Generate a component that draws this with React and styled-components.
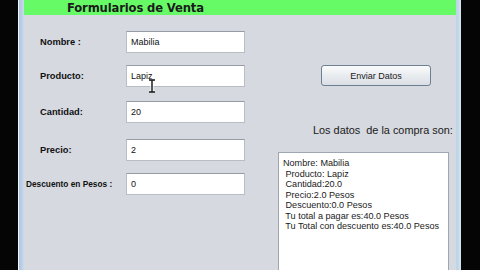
import React from 'react'
import styled, { createGlobalStyle } from 'styled-components'

const Global = createGlobalStyle`
  html, body { margin: 0; padding: 0; background: #050505; }
  body { width: 480px; height: 270px; overflow: hidden; font-family: "Liberation Sans", Arial, sans-serif; }
`;

const Screen = styled.div`
  width: 480px;
  height: 270px;
  display: flex;
  background: #050505;
`;

const Frame = styled.div`
  margin-left: 18px;
  width: 443px;
  height: 270px;
  display: flex;
  flex-direction: column;
  border-left: 1px solid #f4f6f8;
  background: linear-gradient(90deg, #a9c3e0 0, #c3d6ea 4px, #d6d9e0 5px, #d6d9e0 calc(100% - 6px), #b9d3e6 calc(100% - 4px), #d7e6ef 100%);
  padding: 0 5px 0 5px;
  box-sizing: border-box;
`;

const Header = styled.div`
  height: 15px;
  background: #66fb66;
  display: flex;
  align-items: flex-end;
  padding-left: 43px;
  h1 {
    margin: 0;
    font-family: Tahoma, "DejaVu Sans", sans-serif;
    font-size: 11.6px;
    font-weight: bold;
    color: #1b1b1b;
    line-height: 14px;
    letter-spacing: -0.15px;
  }
`;

const Panel = styled.div`
  flex: 1;
  display: flex;
  position: relative;
  background: #d6d9e0;
`;

const FormCol = styled.div`
  width: 230px;
  display: flex;
  flex-direction: column;
  padding-top: 16px;
`;

const Row = styled.div`
  height: 22px;
  margin-top: ${({ $mt }) => $mt}px;
  display: flex;
  align-items: center;
`;

const Label = styled.label`
  width: ${({ $small }) => ($small ? '100px' : '86px')};
  padding-left: ${({ $small }) => ($small ? '2px' : '16px')};
  font-family: "Liberation Sans", Arial, sans-serif;
  font-weight: bold;
  font-size: ${({ $small }) => ($small ? '8.3px' : '9.3px')};
  color: #111;
  white-space: nowrap;
`;

const Field = styled.input`
  width: 119px;
  height: 22px;
  box-sizing: border-box;
  border: 1px solid #b9bec6;
  border-top-color: #969ca6;
  background: #fff;
  padding: 0 4px;
  font-family: "Liberation Sans", Arial, sans-serif;
  font-size: 9px;
  color: #111;
  outline: none;
`;

const SideCol = styled.div`
  flex: 1;
  display: flex;
  flex-direction: column;
  align-items: flex-start;
  padding-top: 50px;
`;

const Button = styled.button`
  margin-left: 67px;
  width: 110px;
  height: 21px;
  border: 1px solid #6f7f92;
  border-radius: 3px;
  background: linear-gradient(#fafbfc, #e9ecef 50%, #dadee4);
  font-family: "Liberation Sans", Arial, sans-serif;
  font-size: 9px;
  color: #222;
  padding: 0;
`;

const Caption = styled.div`
  margin-top: 38px;
  margin-left: 59px;
  font-family: "Liberation Sans", Arial, sans-serif;
  font-size: 10.9px;
  color: #1a1a1a;
  white-space: pre;
`;

const Output = styled.div`
  margin-top: 16px;
  margin-left: 24px;
  width: 171px;
  flex: 1;
  box-sizing: border-box;
  border: 1px solid #9ea6b0;
  border-bottom: none;
  background: #fff;
  padding: 5px 4px;
  font-family: "Liberation Sans", Arial, sans-serif;
  font-size: 9.1px;
  line-height: 10.5px;
  color: #1a1a1a;
  white-space: pre;
`;

const Cursor = styled.svg`
  position: absolute;
  left: 124px;
  top: 64px;
`;

const fields = [
  { label: 'Nombre :', value: 'Mabilia', mt: 0 },
  { label: 'Producto:', value: 'Lapiz', mt: 12 },
  { label: 'Cantidad:', value: '20', mt: 14 },
  { label: 'Precio:', value: '2', mt: 16 },
  { label: 'Descuento en Pesos :', value: '0', mt: 12, small: true },
];

const lines = [
  'Nombre: Mabilia',
  ' Producto: Lapiz',
  ' Cantidad:20.0',
  ' Precio:2.0 Pesos',
  ' Descuento:0.0 Pesos',
  ' Tu total a pagar es:40.0 Pesos',
  ' Tu Total con descuento es:40.0 Pesos',
];

export default function App() {
  return (
    <Screen>
      <Global />
      <Frame>
        <Header>
          <h1>Formularios de Venta</h1>
        </Header>
        <Panel>
          <FormCol>
            {fields.map((f) => (
              <Row key={f.label} $mt={f.mt}>
                <Label $small={f.small}>{f.label}</Label>
                <Field defaultValue={f.value} />
              </Row>
            ))}
          </FormCol>
          <SideCol>
            <Button>Enviar Datos</Button>
            <Caption>Los datos  de la compra son:</Caption>
            <Output>{lines.join('\n')}</Output>
          </SideCol>
          <Cursor width="8" height="14" viewBox="0 0 8 14">
            <path d="M1 1h6M4 1v12M1 13h6" stroke="#fff" strokeWidth="3" fill="none" />
            <path d="M1 1h6M4 1v12M1 13h6" stroke="#111" strokeWidth="1.4" fill="none" />
          </Cursor>
        </Panel>
      </Frame>
    </Screen>
  )
}
